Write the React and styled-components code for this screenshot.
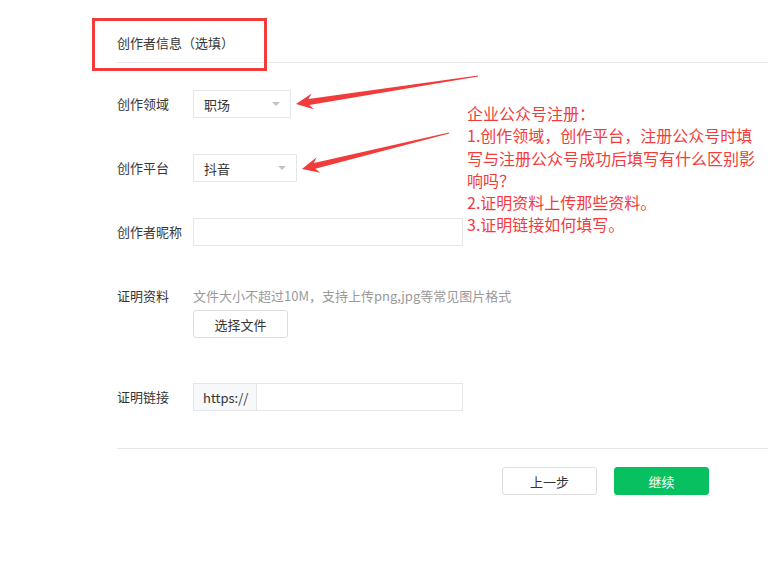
import React from 'react';
import styled, { createGlobalStyle } from 'styled-components';

// Colors:
// label text: #353535 | hint: #9a9a9a
// border: #e4e6e9 | prefix bg: #f6f8f9
// green: #07c160 | annotation red: #f23c3c

const GlobalStyle = createGlobalStyle`
    html, body {
        margin: 0;
        padding: 0;
        background: #fff;
    }
    body {
        font-family: "Noto Sans CJK SC", "Noto Sans", sans-serif;
        color: #353535;
    }
`

const Page = styled.div`
    position: relative;
    width: 768px;
    height: 576px;
    padding-left: 117px;
    box-sizing: border-box;
    overflow: hidden;
`
const Header = styled.div`
    padding: 34px 0 10px 0;
    border-bottom: 1px solid #e7e7eb;
    font-size: 13px;
    line-height: 18px;
`
const Form = styled.div`
    padding-top: 27px;
`
const Row = styled.div`
    display: flex;
    align-items: flex-start;
    margin-bottom: ${p => p.$gap}px;
`
const Label = styled.div`
    width: 76px;
    flex-shrink: 0;
    font-size: 13px;
    line-height: 28px;
`
const Field = styled.div`
    display: flex;
    flex-direction: column;
    align-items: flex-start;
`
const Select = styled.div`
    display: flex;
    align-items: center;
    justify-content: space-between;
    width: ${p => p.$width}px;
    height: 28px;
    box-sizing: border-box;
    padding: 0 10px;
    border: 1px solid #e4e6e9;
    font-size: 13px;
`
const Caret = styled.span`
    width: 0;
    height: 0;
    border-left: 4px solid transparent;
    border-right: 4px solid transparent;
    border-top: 4px solid #c4c4c4;
`
const TextInput = styled.div`
    width: 270px;
    height: 28px;
    box-sizing: border-box;
    border: 1px solid #e4e6e9;
`
const Hint = styled.div`
    font-size: 13px;
    line-height: 28px;
    color: #9a9a9a;
`
const Button = styled.div`
    display: flex;
    align-items: center;
    justify-content: center;
    width: 95px;
    height: 28px;
    box-sizing: border-box;
    border-radius: 3px;
    font-size: 13px;
    border: 1px solid ${p => p.$primary ? '#07c160' : '#dedede'};
    background: ${p => p.$primary ? '#07c160' : '#fff'};
    color: ${p => p.$primary ? '#fff' : '#353535'};
`
const LinkGroup = styled.div`
    display: flex;
    width: 270px;
    height: 28px;
    box-sizing: border-box;
    border: 1px solid #e4e6e9;
`
const Prefix = styled.div`
    width: 63px;
    box-sizing: border-box;
    padding-left: 9px;
    display: flex;
    align-items: center;
    background: #f6f8f9;
    border-right: 1px solid #e4e6e9;
    font-size: 13px;
`
const Footer = styled.div`
    display: flex;
    justify-content: flex-end;
    gap: 17px;
    padding: 18px 59px 0 0;
    border-top: 1px solid #e7e7eb;
`

// annotations drawn over the screenshot
const RedBox = styled.div`
    position: absolute;
    left: 92px;
    top: 18px;
    width: 175px;
    height: 53px;
    box-sizing: border-box;
    border: 3px solid #f23c3c;
`
const Note = styled.div`
    position: absolute;
    left: 467px;
    top: 102px;
    font-size: 16px;
    line-height: 22.3px;
    color: #f23c3c;
    white-space: nowrap;
`
const Overlay = styled.svg`
    position: absolute;
    left: 0;
    top: 0;
    pointer-events: none;
`

function arrowPoints(tip, tail) {
    const dx = tail[0] - tip[0];
    const dy = tail[1] - tip[1];
    const len = Math.hypot(dx, dy);
    const u = [dx / len, dy / len];
    const n = [-u[1], u[0]];
    const at = (d, w) => [tip[0] + u[0] * d + n[0] * w, tip[1] + u[1] * d + n[1] * w];
    const pts = [
        tip,
        at(17, 8),
        at(13, 3),
        [tail[0] + n[0] * 0.6, tail[1] + n[1] * 0.6],
        [tail[0] - n[0] * 0.6, tail[1] - n[1] * 0.6],
        at(13, -3),
        at(17, -8),
    ];
    return pts.map(p => p[0].toFixed(1) + ',' + p[1].toFixed(1)).join(' ');
}

export default function App() {
    return (
        <Page>
            <GlobalStyle />
            <Header>创作者信息（选填）</Header>
            <Form>
                <Row $gap={36}>
                    <Label>创作领域</Label>
                    <Select $width={98}>职场<Caret /></Select>
                </Row>
                <Row $gap={36}>
                    <Label>创作平台</Label>
                    <Select $width={104}>抖音<Caret /></Select>
                </Row>
                <Row $gap={36}>
                    <Label>创作者昵称</Label>
                    <TextInput />
                </Row>
                <Row $gap={45}>
                    <Label>证明资料</Label>
                    <Field>
                        <Hint>文件大小不超过10M，支持上传png,jpg等常见图片格式</Hint>
                        <Button>选择文件</Button>
                    </Field>
                </Row>
                <Row $gap={37}>
                    <Label>证明链接</Label>
                    <LinkGroup>
                        <Prefix>https://</Prefix>
                    </LinkGroup>
                </Row>
            </Form>
            <Footer>
                <Button>上一步</Button>
                <Button $primary>继续</Button>
            </Footer>

            <RedBox />
            <Note>
                企业公众号注册：<br />
                1.创作领域，创作平台，注册公众号时填<br />
                写与注册公众号成功后填写有什么区别影<br />
                响吗？<br />
                2.证明资料上传那些资料。<br />
                3.证明链接如何填写。
            </Note>
            <Overlay width="768" height="576" viewBox="0 0 768 576">
                <polygon points={arrowPoints([296, 104], [478, 76])} fill="#f23c3c" />
                <polygon points={arrowPoints([302, 169], [449, 133])} fill="#f23c3c" />
            </Overlay>
        </Page>
    );
}
